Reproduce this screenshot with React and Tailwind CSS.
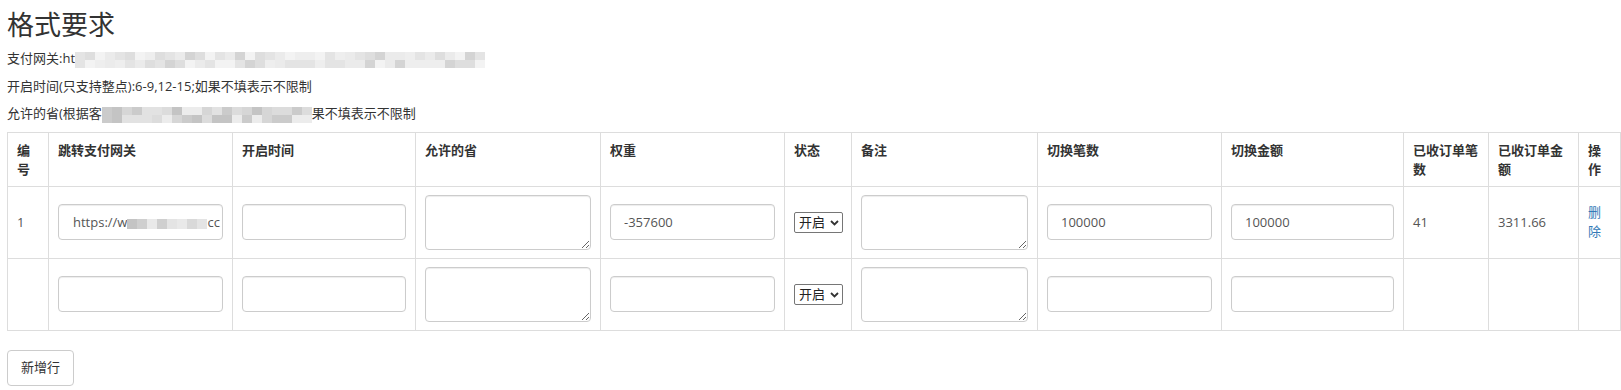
import { useMemo } from "react";

const FONT = { fontFamily: '"Open Sans", "Noto Sans CJK SC", sans-serif' };

// shades for the pixelated (blurred) parts of the screenshot
const LIGHT = ["bg-[#f3f3f3]", "bg-[#ebebeb]", "bg-[#e4e4e4]", "bg-[#dedede]", "bg-[#d4d4d4]", "bg-[#eeeeee]"];
const DARK = ["bg-[#e2e2e2]", "bg-[#d6d6d6]", "bg-[#cbcbcb]", "bg-[#c4c4c4]", "bg-[#dcdcdc]", "bg-[#ececec]"];
const MID = ["bg-[#e4e4e4]", "bg-[#d9d9d9]", "bg-[#cfcfcf]", "bg-[#c4c4c4]", "bg-[#e9e9e9]"];

const Mosaic = ({ cols, rows, cellW, cellH, seed, palette }) => {
  const cells = useMemo(() => {
    let s = seed;
    const out = [];
    for (let i = 0; i < cols * rows; i++) {
      s = (s * 9301 + 49297) % 233280;
      out.push(palette[Math.floor((s / 233280) * palette.length)]);
    }
    return out;
  }, [cols, rows, seed, palette]);

  return (
    <span
      className="inline-grid align-middle"
      style={{ gridTemplateColumns: `repeat(${cols}, ${cellW}px)`, gridAutoRows: `${cellH}px` }}
    >
      {cells.map((c, i) => (
        <span key={i} className={c} />
      ))}
    </span>
  );
};

const cols = [41, 184, 183, 185, 184, 67, 186, 184, 182, 85, 90, 42];
const heads = ["编号", "跳转支付网关", "开启时间", "允许的省", "权重", "状态", "备注", "切换笔数", "切换金额", "已收订单笔数", "已收订单金额", "操作"];

const inputCls =
  "w-full h-[36px] px-[13px] border border-[#ccc] rounded-[4px] bg-white text-[13px] text-[#555] shadow-[inset_0_1px_1px_rgba(0,0,0,0.075)] outline-none";

const Input = ({ value = "" }) => <input className={inputCls} defaultValue={value} />;

const Area = () => (
  <textarea className="block w-full h-[55px] px-[13px] py-[6px] border border-[#ccc] rounded-[4px] bg-white text-[13px] text-[#555] shadow-[inset_0_1px_1px_rgba(0,0,0,0.075)] outline-none resize" />
);

const Select = () => (
  <div className="relative inline-block align-middle">
    <select className="appearance-none block w-[49px] h-[21px] pl-[4px] pr-[14px] border border-[#767676] rounded-[2px] bg-white text-[13px] leading-[19px] text-[#222]">
      <option>开启</option>
      <option>关闭</option>
    </select>
    <svg className="absolute right-[4px] top-[8px] pointer-events-none" width="9" height="6" viewBox="0 0 9 6">
      <path d="M1 1l3.5 3.5L8 1" fill="none" stroke="#333" strokeWidth="1.8" />
    </svg>
  </div>
);

const td = "border border-[#ddd] px-[9px] py-[8px] align-middle text-[13px] leading-[19px] text-[#555]";

export default function App() {
  return (
    <div className="bg-white min-h-[390px] pl-[7px] text-[#333]" style={FONT}>
      <h3 className="pt-[10px] text-[27px] leading-[30px] font-normal text-[#333] mb-[9px]">格式要求</h3>

      <p className="text-[13px] leading-[19px] mb-[8.5px] whitespace-nowrap">
        支付网关:ht
        <Mosaic cols={41} rows={2} cellW={10} cellH={8} seed={7} palette={LIGHT} />
      </p>
      <p className="text-[13px] leading-[19px] mb-[8.5px]">开启时间(只支持整点):6-9,12-15;如果不填表示不限制</p>
      <p className="text-[13px] leading-[19px] mb-[8.5px] whitespace-nowrap">
        允许的省(根据客
        <Mosaic cols={21} rows={2} cellW={10} cellH={8} seed={31} palette={DARK} />
        果不填表示不限制
      </p>

      <table className="table-fixed border-collapse w-[1613px]">
        <colgroup>
          {cols.map((w, i) => (
            <col key={i} style={{ width: w }} />
          ))}
        </colgroup>
        <thead>
          <tr>
            {heads.map((h) => (
              <th
                key={h}
                className="border border-[#ddd] px-[9px] pt-[8px] pb-[7px] h-[54px] align-top text-left text-[13px] leading-[19px] font-bold text-[#333]"
              >
                {h}
              </th>
            ))}
          </tr>
        </thead>
        <tbody>
          <tr>
            <td className={td}>1</td>
            <td className={td}>
              <div className="w-full h-[36px] pl-[14px] pr-[10px] border border-[#ccc] rounded-[4px] bg-white text-[13px] leading-[34px] text-[#555] shadow-[inset_0_1px_1px_rgba(0,0,0,0.075)] overflow-hidden whitespace-nowrap">
                https://w
                <Mosaic cols={8} rows={1} cellW={10} cellH={10} seed={13} palette={MID} />
                cc
              </div>
            </td>
            <td className={td}><Input /></td>
            <td className={td}><Area /></td>
            <td className={td}><Input value="-357600" /></td>
            <td className={td}><Select /></td>
            <td className={td}><Area /></td>
            <td className={td}><Input value="100000" /></td>
            <td className={td}><Input value="100000" /></td>
            <td className={td}>41</td>
            <td className={td}>3311.66</td>
            <td className={td}>
              <a href="#" className="text-[#337ab7]">删除</a>
            </td>
          </tr>
          <tr>
            <td className={td}></td>
            <td className={td}><Input /></td>
            <td className={td}><Input /></td>
            <td className={td}><Area /></td>
            <td className={td}><Input /></td>
            <td className={td}><Select /></td>
            <td className={td}><Area /></td>
            <td className={td}><Input /></td>
            <td className={td}><Input /></td>
            <td className={td}></td>
            <td className={td}></td>
            <td className={td}></td>
          </tr>
        </tbody>
      </table>

      <button className="mt-[19px] h-[36px] px-[13px] border border-[#ccc] rounded-[4px] bg-white text-[13px] text-[#333]">
        新增行
      </button>
    </div>
  );
}
